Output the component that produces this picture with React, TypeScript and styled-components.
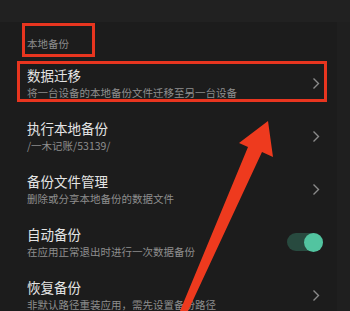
import React from "react";
import styled, { createGlobalStyle } from "styled-components";

const GlobalStyle = createGlobalStyle`
  html, body {
    margin: 0;
    padding: 0;
    background: #1c1c1c;
  }
  body {
    font-family: "Noto Sans CJK SC", "Noto Sans", sans-serif;
  }
`;

const Page = styled.div`
  position: relative;
  width: 350px;
  height: 311px;
  overflow: hidden;
  display: flex;
  align-items: flex-start;
  background: #1c1c1c;
`;

const Content = styled.div`
  flex: 1;
  display: flex;
  flex-direction: column;
  & > * {
    flex-shrink: 0;
  }
`;

const SideStrip = styled.div`
  width: 13px;
  height: 311px;
  box-sizing: border-box;
  background: #1f1f1f;
  border-top: 22px solid #212121;
`;

const TopBar = styled.div`
  height: 22px;
  background: #212121;
`;

const SectionLabel = styled.div`
  padding: 14px 0 5px 27px;
  font-size: 10.5px;
  line-height: 16px;
  color: #8c8c8c;
`;

const Row = styled.div`
  height: 53px;
  box-sizing: border-box;
  padding: 8px 17px 9px 27px;
  display: flex;
  align-items: center;
  justify-content: space-between;
`;

const Texts = styled.div`
  display: flex;
  flex-direction: column;
  align-self: flex-start;
`;

const Title = styled.div`
  font-size: 13.5px;
  line-height: 20px;
  color: #e4e4e4;
`;

const Sub = styled.div`
  font-size: 10.5px;
  line-height: 16px;
  color: #8e8e8e;
  white-space: nowrap;
`;

const Track = styled.div<{ $on: boolean }>`
  width: 36px;
  height: 18px;
  margin-right: -3px;
  border-radius: 9px;
  background: ${(p) => (p.$on ? "#284a3f" : "#3a3a3a")};
  display: flex;
  align-items: center;
  justify-content: ${(p) => (p.$on ? "flex-end" : "flex-start")};
`;

const Knob = styled.div`
  width: 19px;
  height: 19px;
  border-radius: 50%;
  background: #52c4a0;
`;

const Mark = styled.div<{ $x: number; $y: number; $w: number; $h: number }>`
  position: absolute;
  left: ${(p) => p.$x}px;
  top: ${(p) => p.$y}px;
  width: ${(p) => p.$w}px;
  height: ${(p) => p.$h}px;
  box-sizing: border-box;
  border: 3px solid #e8351f;
  pointer-events: none;
`;

const Arrow = styled.svg`
  position: absolute;
  left: 0;
  top: 0;
  pointer-events: none;
`;

const Chevron = () => (
  <svg width="8" height="13" viewBox="0 0 8 13">
    <path d="M1.5 1.5 L6.5 6.5 L1.5 11.5" fill="none" stroke="#8a8a8a" strokeWidth="1.4" />
  </svg>
);

type Item = { title: string; sub: string; toggle?: boolean };

const items: Item[] = [
  { title: "数据迁移", sub: "将一台设备的本地备份文件迁移至另一台设备" },
  { title: "执行本地备份", sub: "/一木记账/53139/" },
  { title: "备份文件管理", sub: "删除或分享本地备份的数据文件" },
  { title: "自动备份", sub: "在应用正常退出时进行一次数据备份", toggle: true },
  { title: "恢复备份", sub: "非默认路径重装应用，需先设置备份路径" },
];

export default function App() {
  return (
    <Page>
      <GlobalStyle />
      <Content>
        <TopBar />
        <SectionLabel>本地备份</SectionLabel>
        {items.map((it) => (
          <Row key={it.title}>
            <Texts>
              <Title>{it.title}</Title>
              <Sub>{it.sub}</Sub>
            </Texts>
            {it.toggle ? (
              <Track $on>
                <Knob />
              </Track>
            ) : (
              <Chevron />
            )}
          </Row>
        ))}
      </Content>
      <SideStrip />
      <Mark $x={22} $y={23} $w={73} $h={34} />
      <Mark $x={17} $y={61} $w={310} $h={41} />
      <Arrow width="350" height="311" viewBox="0 0 350 311">
        <polygon
          points="268,121 273,157 262,152 188,311 180,311 248,147 239,143"
          fill="#ee3a1e"
        />
      </Arrow>
    </Page>
  );
}
